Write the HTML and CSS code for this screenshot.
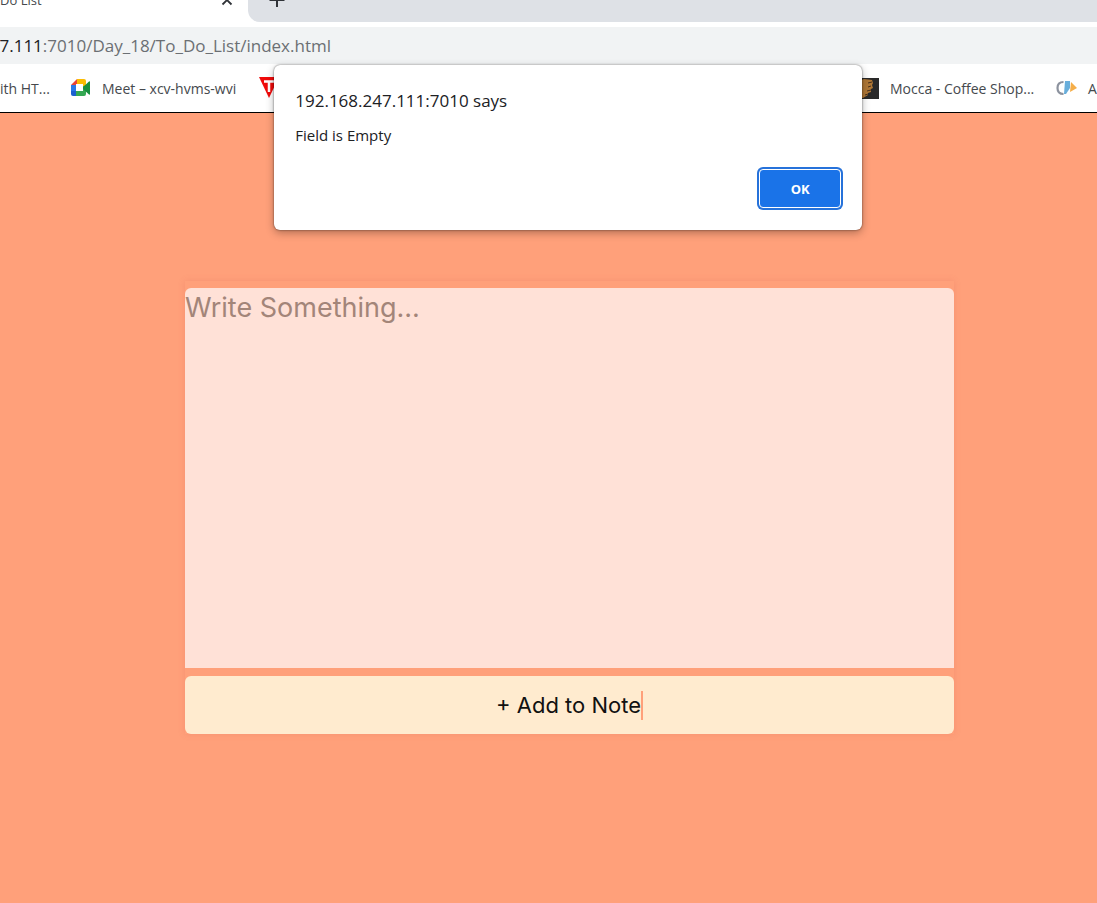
FILE: index.html
```html
<!DOCTYPE html>
<html lang="en">
<head>
<meta charset="utf-8">
<title>To Do List</title>
<link rel="stylesheet" href="styles.css">
</head>
<body>
<header class="browser">
  <div class="tabs">
    <div class="tab">
      <span class="tab-title">Do List</span>
      <button class="tab-close" aria-label="Close tab"><svg width="12" height="12" viewBox="0 0 12 12"><path d="M1.500 1.500l9 9M10.500 1.500l-9 9" stroke="#303338" stroke-width="1.800"/></svg></button>
    </div>
    <div class="strip">
      <button class="tab-new" aria-label="New tab"><svg width="16" height="16" viewBox="0 0 16 16"><path d="M8 1v14M0.500 8h15" stroke="#303338" stroke-width="2"/></svg></button>
    </div>
  </div>
  <div class="address"><div class="url"><span class="host">7.111</span>:7010/Day_18/To_Do_List/index.html</div></div>
  <nav class="bookmarks">
    <a class="mark first" href="#"><span>ith HT...</span></a>
    <a class="mark meet" href="#">
      <svg width="20" height="18" viewBox="0 0 20 18"><path d="M0 6L6 0v6z" fill="#ea4335"/><path d="M6 0h7q2 0 2 2v5l-4 2V6H6z" fill="#fbbc04"/><path d="M0 6h5v7H0z" fill="#2878e8"/><path d="M0 12h5v5H2q-2 0-2-2z" fill="#1b5fd0"/><path d="M5 12h6V8l4-2v9q0 2-2 2H5z" fill="#34a853"/><path d="M11 9l7-6.500q1-.5 1 .5v12q0 1-1 .5z" fill="#188f3e"/><path d="M5 5h7v7H5z" fill="#fff"/></svg>
      <span>Meet – xcv-hvms-wvi</span></a>
    <a class="mark red" href="#" aria-label="Bookmark">
      <svg width="20" height="22" viewBox="0 0 20 22"><path d="M0 0h20L10 21z" fill="#f00a0a"/><path d="M5 4.500h10M10 4v11" stroke="#fff" stroke-width="2.500"/></svg></a>
    <a class="mark mocca" href="#">
      <svg width="20" height="21" viewBox="0 0 20 21"><path d="M0 0h20v21H0z" fill="#292929"/><path d="M0 3l5-2 8 1 1 3-1 2 1 3-2 1v3l-3 1v2l-5 3H0z" fill="#b07836"/><path d="M9 5l4-1M9 9l3-1M8 13l4-1M6 17l3-1" stroke="#48301b" stroke-width="1"/></svg>
      <span>Mocca - Coffee Shop...</span></a>
    <a class="mark" href="#">
      <svg width="21" height="16" viewBox="0 0 21 16"><path d="M7.500 2Q1.500 2 1.500 8T7.500 14" fill="none" stroke="#8c929e" stroke-width="2.200"/><path d="M9 1h5v7l-4 6H8z" fill="#68aedb"/><path d="M15 2l6 6-7 4z" fill="#f5ae49"/></svg>
      <span>A</span></a>
  </nav>
</header>
<div class="dialog" role="alertdialog" aria-labelledby="dlg-title" aria-describedby="dlg-text">
  <h1 class="dialog-title" id="dlg-title">192.168.247.111:7010 says</h1>
  <p class="dialog-text" id="dlg-text">Field is Empty</p>
  <button class="ok">OK</button>
</div>
<main class="page">
  <div class="note">
    <textarea class="note-input" aria-label="Note" placeholder="Write Something..."></textarea>
    <button class="add"><span class="add-label">+ Add to Note</span></button>
  </div>
</main>
</body>
</html>
```
FILE: styles.css
```css
* { box-sizing: border-box; }
body {
  margin: 0;
  min-height: 100vh;
  display: flex;
  flex-direction: column;
  position: relative;
  overflow: hidden;
  background: #ffa07a;
  font-family: "Open Sans", "Noto Sans", sans-serif;
}
button { font: inherit; border: 0; padding: 0; background: none; }
svg { display: block; flex: none; }
.browser { background: #fff; border-bottom: 1px solid #000; }
.tabs { display: flex; height: 22px; margin-bottom: 5px; }
.tab {
  width: 248px;
  display: flex;
  justify-content: space-between;
  padding-right: 15px;
  height: 22px;
}
.tab-title { font-size: 13px; line-height: 18px; color: #45494d; margin-top: -9px; }
.tab-close { align-self: flex-start; margin-top: -6px; }
.strip { flex: 1; background: #dee1e6; border-bottom-left-radius: 12px; padding-left: 21px; }
.tab-new { display: block; margin-top: -8px; }
.address { background: #f1f3f4; height: 37px; overflow: hidden; }
.url {
  width: 331px;
  display: flex;
  justify-content: flex-end;
  white-space: nowrap;
  font-size: 17px;
  line-height: 37px;
  color: #6b6f73;
}
.host { color: #202124; }
.bookmarks {
  display: flex;
  align-items: center;
  height: 48px;
  overflow: hidden;
  font-size: 14px;
  white-space: nowrap;
}
.mark { display: flex; align-items: center; flex: none; gap: 11px; color: #45494d; text-decoration: none; }
.first { width: 71px; }
.meet { width: 188px; }
.red { width: 600px; }
.mocca { width: 197px; }
.dialog {
  position: absolute;
  top: 65px;
  left: 25%;
  width: 588px;
  padding: 24px 21px 22px;
  display: flex;
  flex-direction: column;
  background: #fff;
  border-radius: 6px;
  box-shadow: 0 0 2px rgba(0, 0, 0, .6), 0 3px 8px rgba(0, 0, 0, .3);
  color: #202124;
}
.dialog-title { margin: 0; font-size: 17px; line-height: 24px; font-weight: 400; }
.dialog-text { margin: 11px 0 23px; font-size: 15px; line-height: 22px; }
.ok {
  align-self: flex-end;
  width: 82px;
  height: 39px;
  border: 1px solid #fff;
  border-radius: 4px;
  background: #1a73e8;
  box-shadow: 0 0 0 2px #2672da;
  color: #fff;
  font-size: 13px;
  font-weight: 700;
}
.page { flex: 1; padding: 168px 143px 0 185px; }
.note {
  display: flex;
  flex-direction: column;
  gap: 8px;
  padding-top: 7px;
  box-shadow: 0 0 6px rgba(220, 100, 90, .25);
  font-family: Inter, "Open Sans", sans-serif;
}
.note-input {
  height: 380px;
  padding: 0;
  border: 0;
  border-radius: 6px 6px 0 0;
  background: #ffe1d7;
  resize: none;
  font: inherit;
  font-size: 27px;
  line-height: 40px;
}
.note-input::placeholder { color: #a38579; opacity: 1; }
.add { height: 58px; border-radius: 6px; background: #ffebcf; color: #111; font-size: 22px; }
.add-label { display: inline-block; line-height: 29px; border-right: 2px solid #ffa07a; }
```
